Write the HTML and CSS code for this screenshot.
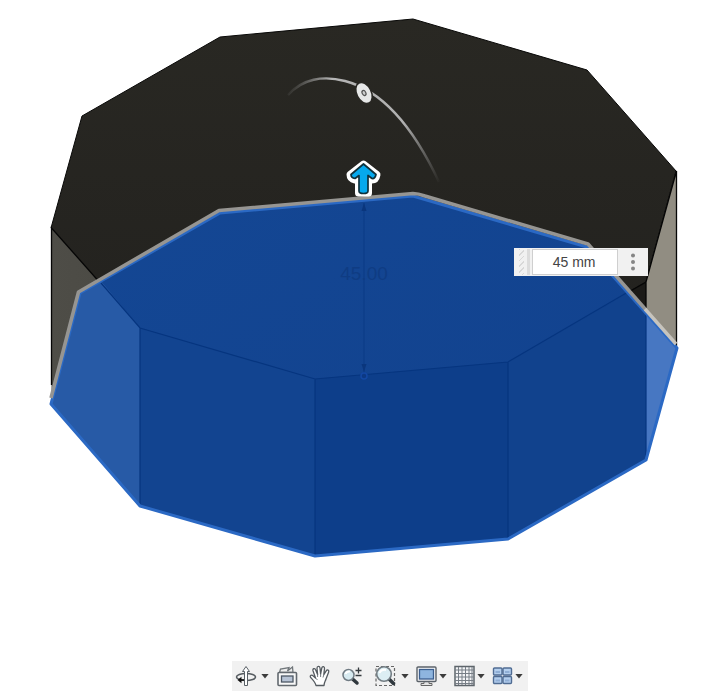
FILE: index.html
```html
<!DOCTYPE html>
<html lang="en">
<head>
<meta charset="utf-8">
<meta name="viewport" content="width=device-width, initial-scale=1">
<title>Extrude</title>
<link rel="stylesheet" href="styles.css">
</head>
<body>
<main class="viewport">
  <svg class="model" viewBox="0 0 719 661" role="img" aria-label="Ten-sided solid being extruded">
    <defs>
      <linearGradient id="top" x1="0" y1="0" x2="0" y2="1"><stop offset="0" stop-color="#292823"/><stop offset="1" stop-color="#22211e"/></linearGradient>
      <linearGradient id="left"><stop offset="0" stop-color="#4e4d47"/><stop offset="1" stop-color="#4a4943"/></linearGradient>
      <linearGradient id="blue" x1="0" y1="0" x2="1" y2="1"><stop offset="0" stop-color="#144794"/><stop offset="1" stop-color="#11418d"/></linearGradient>
      <linearGradient id="arc" gradientUnits="userSpaceOnUse" x1="286" y1="93" x2="440" y2="184"><stop offset="0" stop-color="#b5b5b5" stop-opacity="0"/><stop offset=".18" stop-color="#b5b5b5"/><stop offset=".65" stop-color="#b0b0b0"/><stop offset="1" stop-color="#999" stop-opacity="0"/></linearGradient>
    </defs>
    <!-- Solid body -->
    <path d="M82 116 220 37 413 19 587 70 676 171 646 282 508 362 315 379 140 328 51 228Z" fill="url(#top)" stroke="#080807"/>
    <path d="M51.500 228 140 328V500L51.500 400Z" fill="url(#left)"/>
    <path d="M646 282 676.500 171V348L646 315Z" fill="#918d82"/>
    <path d="M620 297 646 282V320Z" fill="#1b1a17"/>
    <path d="M51.500 385V228L140 328M620 297 646 282 676.500 171V346M646 282V315" fill="none" stroke="#060606" stroke-width="1.300"/>
    <!-- Selected profile -->
    <path d="M80 293 220 213 413 196 587 247 677 348 646 460 508 539 315 556 140 506 51 404Z" fill="url(#blue)"/>
    <path d="M80 293 101 281 140 328V506L51 404Z" fill="#275aa6"/>
    <path d="M140 328 315 379V556L140 506Z" fill="#124490"/>
    <path d="M315 379 508 362V539L315 556Z" fill="#0d3e8a"/>
    <path d="M508 362 628 293 646 313V460L508 539Z" fill="#11428d"/>
    <path d="M646 313 677 348 646 460Z" fill="#4777c2"/>
    <path d="M101 283 140 328 315 379 508 362 628 292M140 328V505M315 379V555M508 362V538M646 314V459" fill="none" stroke="#06357f" stroke-width="1.200"/>
    <path d="M80 293 220 213 413 196 587 247 677 348 646 460 508 539 315 556 140 506 51 404Z" fill="none" stroke="#2b69c4" stroke-width="3" stroke-linejoin="round"/>
    <path d="M51 398 78.500 292 219 210.500 413 193.500Q418 193.500 425 196L588 244 646 310" fill="none" stroke="#969592" stroke-width="3.600" stroke-linejoin="round"/>
    <path d="M645 309 676 344" stroke="#c7c4bd" stroke-width="3.400"/>
    <!-- Dimension -->
    <g class="dimension">
      <path d="M364 203V374" stroke="#0b3a85"/>
      <path d="M364 203 361.500 211H366.500ZM364 372 361.500 364H366.500Z" fill="#0a367d"/>
      <circle cx="364" cy="376" r="3" fill="#0c3984" stroke="#1348a3" stroke-width="1.500"/>
      <text x="364" y="280" text-anchor="middle">45.00</text>
    </g>
    <!-- Taper handle -->
    <path d="M288 95C302 79 323 75 345 81 387 92 418 137 439 182" fill="none" stroke="url(#arc)" stroke-width="2.400"/>
    <g transform="rotate(-27 364 93)">
      <ellipse cx="364" cy="93" rx="8" ry="12" fill="#292824"/>
      <ellipse cx="364" cy="93" rx="6.500" ry="10.500" fill="#e7e8e8"/>
      <ellipse cx="364" cy="93" rx="1.800" ry="2.700" fill="#cfd0d0" stroke="#555" stroke-width="1.200"/>
    </g>
    <!-- Distance handle -->
    <path d="M363.500 164 377 174.500Q376 180 372 180L368.500 177.500V193H358.500V177.500L355 180Q350 179 350 174.500Z" fill="#fff" stroke="#fff" stroke-width="7" stroke-linejoin="round"/>
    <path d="M363.500 164 376 174.500Q375 179 372 178.500L368 175.500V191Q368 193.500 363.500 193.500T359 191V175.500L355 178.500Q351 178 351 174.500Z" fill="#06a9ed" stroke="#10313b" stroke-width="1.700" stroke-linejoin="round"/>
  </svg>
  <form class="value-box">
    <span class="grip"></span>
    <input class="distance" type="text" value="45 mm" aria-label="Distance">
    <button class="more" type="button" aria-label="More options"><svg width="6" height="18" viewBox="0 0 6 18" fill="#858585"><circle cx="3" cy="2.500" r="2"/><circle cx="3" cy="9" r="2"/><circle cx="3" cy="15.500" r="2"/></svg></button>
  </form>
</main>
<footer class="dock">
  <nav class="toolbar" aria-label="Navigation">
    <div class="split loose">
      <button class="tool" type="button" aria-label="Orbit"><svg class="icon" viewBox="0 0 22 22"><ellipse cx="11" cy="12" rx="9.500" ry="3.500" fill="none" stroke="#555b60" stroke-width="1.600"/><path d="M9.500 20.500V6.500H7.500L11 1.500 14.500 6.500H12.500V20.500Z" fill="#fff" stroke="#596066"/><path d="M5 15H9" stroke="#111" stroke-width="1.600"/><path d="M2.500 15 6.500 11.800V18.200Z" fill="#111"/></svg></button>
      <button class="caret" type="button" aria-label="Orbit options"></button>
    </div>
    <button class="tool plain" type="button" aria-label="Look at"><svg class="icon" viewBox="0 0 22 22"><path d="M3.500 7.500 4.500 4 13 2.500 11.500 6 16.500 2 17 7.500Z" fill="#eee" stroke="#70767a" stroke-width="1.300"/><rect x="2" y="7.500" width="18.500" height="13" rx="1" fill="#f8f8f8" stroke="#62686e" stroke-width="1.600"/><rect x="5.500" y="11" width="11.500" height="6" fill="#b7c3d5" stroke="#4d5865" stroke-width="1.300"/></svg></button>
    <button class="tool plain" type="button" aria-label="Pan"><svg class="icon" viewBox="0 0 22 22"><path d="M7 20.500C6.500 17.500 3.500 14.500 1.500 12.200 .5 10.500 2.800 9.500 4 10.800L6.500 13 4 5.800C3.300 3.500 6 2.800 6.700 5L8.600 9.500 8 3.200C8 .8 10.700 .8 11 3L11.600 9 12.800 3C13.300 .9 15.800 1.400 15.500 3.700L14.800 9.700 17.200 5.800C18.300 4 20.500 5.200 19.600 7.300L17 14C16.500 16 15 17.500 15 20.500Z" fill="#fff" stroke="#555b60" stroke-width="1.300" stroke-linejoin="round"/><path d="M8.600 9.500V12M11.600 9V12M14.800 9.700 14 12.500M6.500 13 8.500 15" fill="none" stroke="#747b81"/></svg></button>
    <button class="tool plain" type="button" aria-label="Zoom"><svg class="icon" viewBox="0 0 22 22"><path d="M10.500 14 15 18" stroke="#30383e" stroke-width="3.500" stroke-linecap="round"/><circle cx="6.500" cy="10" r="5.500" fill="#d7eaf0" stroke="#707b83" stroke-width="1.500"/><path d="M3.500 9Q4.500 6 8 6.500" fill="none" stroke="#fff" stroke-width="2"/><path d="M13.500 5.500H19.500M16.500 2.500V8.500M13.500 10.500H19.500" stroke="#343a3f" stroke-width="1.300"/></svg></button>
    <div class="split loose">
      <button class="tool" type="button" aria-label="Zoom window"><svg class="icon" viewBox="0 0 22 22"><path d="M1 1.500H19.500V20.500H1Z" fill="none" stroke="#666" stroke-width="1.200" stroke-dasharray="3 2"/><path d="M14 14 18.500 18.500" stroke="#30383e" stroke-width="3.500" stroke-linecap="round"/><circle cx="9" cy="9" r="7.300" fill="#dceef3" stroke="#737d83" stroke-width="1.600"/><path d="M4.500 8Q6 4 11 5" fill="none" stroke="#fff" stroke-width="2"/></svg></button>
      <button class="caret" type="button" aria-label="Zoom options"></button>
    </div>
    <div class="split">
      <button class="tool" type="button" aria-label="Display settings"><svg class="icon" viewBox="0 0 22 22"><path d="M8 16H13V18.500H16V20.500H5V18.500H8Z" fill="#e5e5e5" stroke="#666" stroke-width="1"/><rect x="1" y="2" width="19" height="14.500" rx="1" fill="#f4f5f6" stroke="#5b6269" stroke-width="1.400"/><rect x="3.500" y="4.500" width="14" height="9.500" fill="#8eb5df" stroke="#3c5f8f" stroke-width="1.300"/></svg></button>
      <button class="caret" type="button" aria-label="Display options"></button>
    </div>
    <div class="split">
      <button class="tool" type="button" aria-label="Grid and snaps"><svg class="icon" viewBox="0 0 22 22"><rect x="1" y="1.500" width="19" height="19" fill="#f3f4f6" stroke="#5e656b" stroke-width="1.500"/><path d="M4.500 2V20M8 2V20M11.500 2V20M15 2V20M18 2V20M1 5H20M1 8.500H20M1 12H20M1 15.500H20M1 18.500H20" stroke="#777e86" stroke-width="1"/></svg></button>
      <button class="caret" type="button" aria-label="Grid options"></button>
    </div>
    <div class="split">
      <button class="tool" type="button" aria-label="Viewports"><svg class="icon" viewBox="0 0 22 22"><g fill="#b4cfee" stroke="#506c93" stroke-width="1.400"><rect x="1.500" y="3" width="8.500" height="7" rx="1"/><rect x="11" y="3" width="8.500" height="7" rx="1"/><rect x="1.500" y="11.500" width="8.500" height="7" rx="1"/><rect x="11" y="11.500" width="8.500" height="7" rx="1"/></g><path d="M3.500 7H8M13 7H17.500M3.500 15.500H8M13 15.500H17.500" stroke="#8faed5" stroke-width="2"/></svg></button>
      <button class="caret" type="button" aria-label="Viewport options"></button>
    </div>
  </nav>
</footer>
</body>
</html>
```

FILE: styles.css
```css
* { box-sizing: border-box; }

body {
  margin: 0;
  min-height: 100vh;
  display: flex;
  flex-direction: column;
  background: #fff;
  font-family: "Liberation Sans", sans-serif;
}

button {
  padding: 0;
  border: 0;
  background: none;
}

.viewport { position: relative; }

.model {
  display: block;
  width: 100%;
  height: auto;
}

.dimension text {
  font: 19px "Liberation Sans", sans-serif;
  fill: #0f3c83;
}

.value-box {
  position: absolute;
  left: 71.5%;
  top: 37.5%;
  display: flex;
  align-items: center;
  height: 28px;
  padding: 1px 0;
  background: #f1f1f1;
}

.grip {
  width: 11px;
  height: 26px;
  margin: 0 2px 0 5px;
  border-right: 3px solid #dcdcdc;
  background: repeating-linear-gradient(135deg, #d8d8d8 0 1px, #f1f1f1 1px 4px) left / 5px 100% no-repeat;
}

.distance {
  width: 86px;
  height: 26px;
  padding: 0 2px 0 0;
  border: 1px solid #cfcfcf;
  background: #fff;
  color: #444;
  font: 14px "Liberation Sans", sans-serif;
  text-align: center;
}

.more {
  width: 30px;
  height: 26px;
  display: grid;
  place-items: center;
}

.dock {
  display: flex;
  justify-content: center;
  margin-top: auto;
  padding: 0 0 4px 41px;
}

.toolbar {
  display: flex;
  align-items: center;
  gap: 7px;
  height: 30px;
  padding: 0 5px 0 3px;
  background: #f1f1f1;
}

.split {
  display: flex;
  align-items: center;
  gap: 1px;
}

.loose { gap: 4px; }

.tool,
.icon {
  display: block;
  width: 22px;
  height: 22px;
}

.plain { margin-right: 4px; }

.caret {
  width: 8px;
  height: 5px;
  background: #3c3c3c;
  clip-path: polygon(0 0, 100% 0, 50% 100%);
}
```
